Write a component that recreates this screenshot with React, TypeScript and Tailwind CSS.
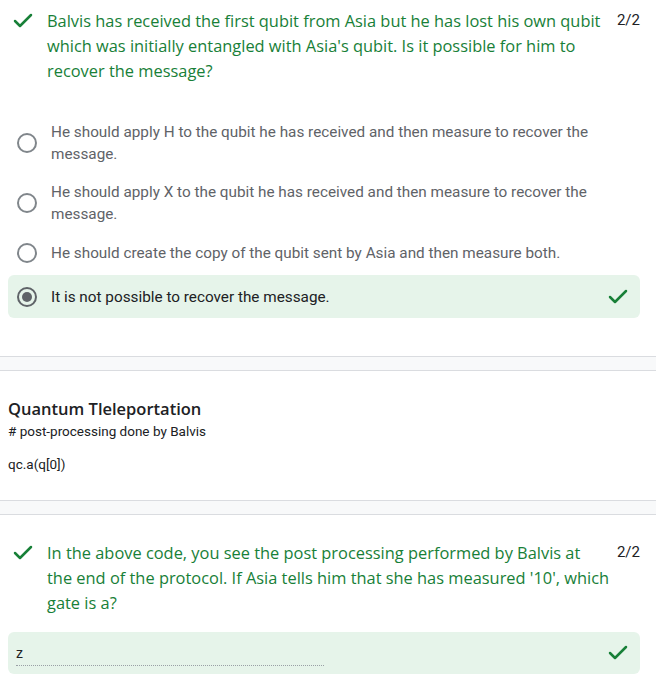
import { ReactNode } from "react";
import { Check } from "lucide-react";

const sans = "font-['Roboto',_'Liberation_Sans',_sans-serif]";
const heading = "font-['Open_Sans',_'Roboto',_sans-serif]";

function Radio({ selected }: { selected?: boolean }) {
	return (
		<div
			className={`w-5 h-5 shrink-0 rounded-full border-2 flex items-center justify-center ${
				selected ? "border-[#5f6368]" : "border-[#80868b]"
			}`}
		>
			{selected && <div className="w-[10px] h-[10px] rounded-full bg-[#5f6368]" />}
		</div>
	);
}

function QuestionHeader({ children, points }: { children: ReactNode; points: string }) {
	return (
		<div className="flex items-start">
			<div className="w-[39px] shrink-0 pl-[3px] pt-[1px]">
				<Check className="w-6 h-6 text-[#188038]" strokeWidth={2.5} />
			</div>
			<p className={`flex-1 text-[16.4px] leading-[25px] text-[#188038] ${heading}`}>
				{children}
			</p>
			<span className={`pl-[2px] text-[15px] leading-[25px] text-[#202124] ${sans}`}>{points}</span>
		</div>
	);
}

function Option({ text }: { text: string }) {
	return (
		<div className="flex items-center pl-[9px]">
			<Radio />
			<p className={`ml-[14px] text-[15.3px] leading-[22px] text-[#5f6368] ${sans} pr-10`}>
				{text}
			</p>
		</div>
	);
}

function Divider() {
	return <div className="h-[15px] bg-[#f8f9fa] border-y border-[#dadce0]" />;
}

export default function App() {
	return (
		<div className="w-[656px] h-[695px] bg-white overflow-hidden">
			<div className="pl-2 pr-4 pt-[8px]">
				<QuestionHeader points="2/2">
					Balvis has received the first qubit from Asia but he has lost his own qubit which was
					initially entangled with Asia's qubit. Is it possible for him to recover the message?
				</QuestionHeader>
				<div className="mt-[38px] flex flex-col">
					<Option text="He should apply H to the qubit he has received and then measure to recover the message." />
					<div className="h-4" />
					<Option text="He should apply X to the qubit he has received and then measure to recover the message." />
					<div className="h-[17px]" />
					<Option text="He should create the copy of the qubit sent by Asia and then measure both." />
					<div className="mt-[11px] h-[43px] rounded-md bg-[#e6f4ea] flex items-center pl-[9px] pr-[10px]">
						<Radio selected />
						<p className={`ml-[14px] flex-1 text-[15.3px] leading-[22px] text-[#202124] ${sans}`}>
							It is not possible to recover the message.
						</p>
						<Check className="w-6 h-6 text-[#188038]" strokeWidth={2.5} />
					</div>
				</div>
			</div>
			<div className="mt-[38px]">
				<Divider />
			</div>
			<div className="px-2 pt-[28px] pb-[27px]">
				<h2 className={`text-[16.5px] leading-[20px] font-semibold text-[#202124] ${heading}`}>
					Quantum Tleleportation
				</h2>
				<p className={`mt-[3px] text-[13.5px] leading-[18px] text-[#202124] ${sans}`}>
					# post-processing done by Balvis
				</p>
				<p className={`mt-[15px] text-[13.5px] leading-[18px] text-[#202124] ${sans}`}>
					qc.a(q[0])
				</p>
			</div>
			<Divider />
			<div className="pl-2 pr-4 pt-[25px]">
				<QuestionHeader points="2/2">
					In the above code, you see the post processing performed by Balvis at
					<br />
					the end of the protocol. If Asia tells him that she has measured '10', which gate is a?
				</QuestionHeader>
				<div className="mt-[17px] h-[42px] rounded-md bg-[#e6f4ea] flex items-center pl-2 pr-[10px]">
					<div className="flex-1">
						<div className="w-[308px] border-b border-dotted border-[#9aa0a6] pb-[1px]">
							<span className={`text-[14px] leading-[18px] text-[#202124] ${sans}`}>z</span>
						</div>
					</div>
					<Check className="w-6 h-6 text-[#188038]" strokeWidth={2.5} />
				</div>
			</div>
		</div>
	);
}
